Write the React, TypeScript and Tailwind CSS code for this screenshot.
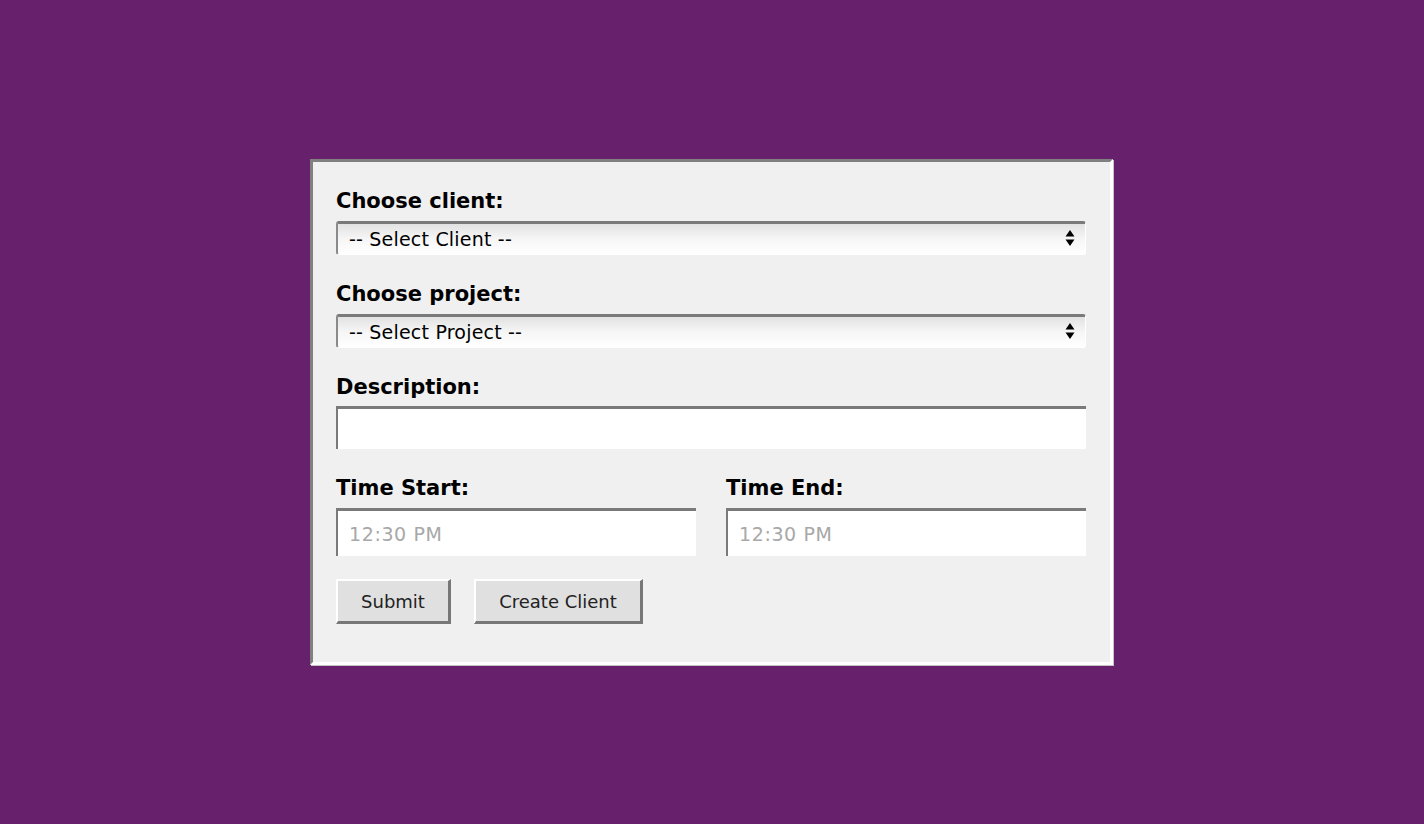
import React from "react";

const labelCls =
  "block pt-[3px] text-[21px] leading-[25px] font-bold text-black [font-family:'DejaVu_Sans',sans-serif]";

const fieldFont = "[font-family:'DejaVu_Sans',sans-serif]";

function Arrows() {
  return (
    <svg width="10" height="20" viewBox="0 0 10 20" className="pointer-events-none absolute right-[11px] top-1/2 -translate-y-1/2">
      <path d="M5 2 L9.5 8.5 L0.5 8.5 Z" fill="#000" />
      <path d="M5 18 L9.5 11.5 L0.5 11.5 Z" fill="#000" />
    </svg>
  );
}

function Select({ text }: { text: string }) {
  return (
    <div className="relative h-[34px] w-[750px]">
      <select
        className={
          "h-full w-full appearance-none rounded-[3px] border-t-[3px] border-l-[2px] border-r border-b border-t-[#7a7a7a] border-l-[#8a8a8a] border-r-white border-b-white bg-gradient-to-b from-[#e2e2e2] via-[#f6f6f6] to-white pl-[11px] text-[19px] text-black outline-none tracking-[0.2px] " +
          fieldFont
        }
      >
        <option>{text}</option>
      </select>
      <Arrows />
    </div>
  );
}

const btnCls =
  "h-[45px] border-t-2 border-l-2 border-r-[3px] border-b-[3px] border-t-white border-l-white border-r-[#777] border-b-[#777] bg-[#e0e0e0] text-[18px] text-[#222] [font-family:'DejaVu_Sans',sans-serif]";

export default function App() {
  return (
    <div className="flex h-[824px] w-[1424px] items-center justify-center bg-[#67206c]">
      <div className="mr-[1px] w-[803px] border-[3px] border-t-[#808080] border-l-[#808080] border-b-white border-r-white bg-[#f0f0f0] pl-[23px] pr-[24px] pt-[24px] pb-[38px] shadow-[1px_1px_0_#c4c4c4]">
        <label className={labelCls}>Choose client:</label>
        <div className="mt-[7px]">
          <Select text="-- Select Client --" />
        </div>

        <label className={labelCls + " mt-[24px]"}>Choose project:</label>
        <div className="mt-[7px]">
          <Select text="-- Select Project --" />
        </div>

        <label className={labelCls + " mt-[24px]"}>Description:</label>
        <input
          type="text"
          className={
            "mt-[6px] block h-[43px] w-[750px] border-t-[3px] border-l-[2px] border-t-[#7a7a7a] border-l-[#7a7a7a] bg-white px-[11px] text-[19px] outline-none " +
            fieldFont
          }
        />

        <div className="mt-[24px] flex gap-[30px]">
          {["Time Start:", "Time End:"].map((l) => (
            <div key={l} className="w-[360px]">
              <label className={labelCls}>{l}</label>
              <input
                type="text"
                placeholder="12:30 PM"
                className={
                  "mt-[7px] block h-[48px] w-[360px] border-t-[3px] border-l-[2px] border-t-[#7a7a7a] border-l-[#7a7a7a] bg-white px-[11px] text-[19px] tracking-[0.6px] outline-none placeholder:text-[#a8a8a8] " +
                  fieldFont
                }
              />
            </div>
          ))}
        </div>

        <div className="mt-[23px] flex gap-[23px]">
          <button className={btnCls + " w-[115px]"}>Submit</button>
          <button className={btnCls + " w-[169px]"}>Create Client</button>
        </div>
      </div>
    </div>
  );
}
